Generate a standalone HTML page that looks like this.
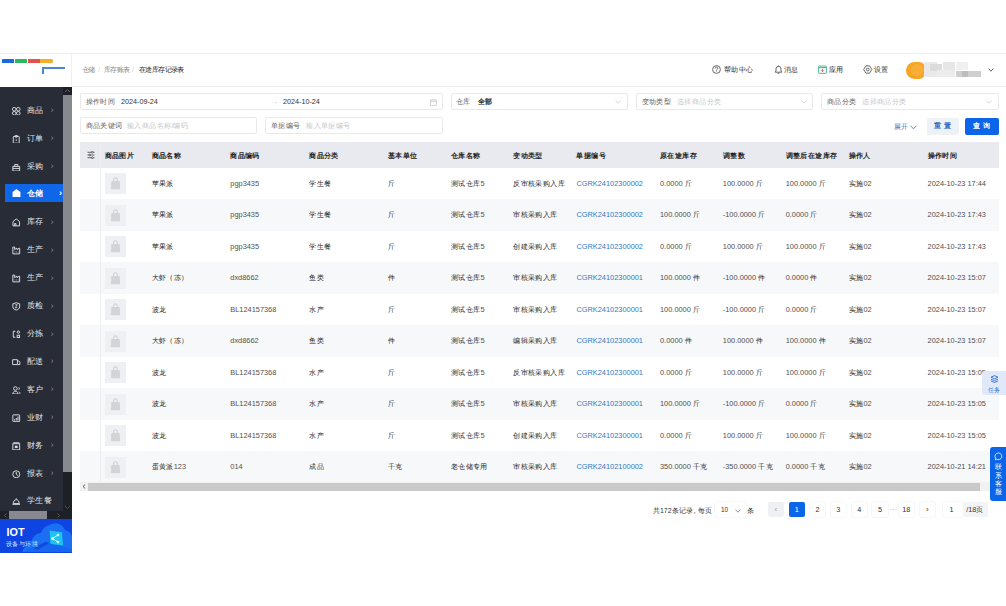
<!DOCTYPE html>
<html><head><meta charset="utf-8">
<style>
*{box-sizing:border-box;margin:0;padding:0}
html,body{width:1006px;height:606px;overflow:hidden;background:#fff;font-family:"Liberation Sans",sans-serif;color:#333}
.a{position:absolute}
#topline{left:0;top:53px;width:1006px;height:1px;background:#e9f0f0}
#logo{left:0;top:54px;width:72px;height:33px;background:#fff;border-right:1px solid #f0f0f0}
#side{left:0;top:87px;width:72px;height:432px;background:#282c37;overflow:hidden}
.mi{position:absolute;left:0;width:63px;height:18px;color:#e4e6ea;font-size:8px;line-height:18px}
.mi .ic{position:absolute;left:12px;top:5px;width:8.5px;height:8.5px}
.mi .tx{position:absolute;left:27px;top:0}
.mi .ar{position:absolute;left:50.5px;top:-0.5px;font-size:9px;color:#80838c}
.mi.on{left:5px;width:58px;background:#0e66e8;color:#fff;font-weight:bold}
.mi.on .ic{left:7px}.mi.on .tx{left:22px;top:0.5px}.mi.on .ar{left:54px;color:#fff}
#vs{left:63px;top:87px;width:9px;height:424px;background:#1e2028}
#vthumb{left:63px;top:95px;width:9px;height:377px;background:#88898e}
#hs{left:0;top:511px;width:72px;height:8px;background:#1e2028}
#hthumb{left:9px;top:511px;width:38px;height:8px;background:#88898e}
#iot{left:0;top:519px;width:72px;height:33.5px;background:#0e44e2;overflow:hidden}
#hdr{left:72px;top:54px;width:934px;height:33px;background:#fff;border-bottom:1px solid #eef0f2}
.bc{font-size:6.6px;color:#8a8a8a;top:66px}
.bc i.z{letter-spacing:-.6px}
.hi{font-size:7.3px;color:#262626;top:65.3px}
.inp{position:absolute;height:17px;border:1px solid #e9e9e9;border-radius:2px;background:#fff;font-size:7.2px;line-height:15px}
.lbl{position:absolute;left:4.5px;top:0;color:#606060}
.ph{position:absolute;top:0;color:#c4c6ca}
.val{position:absolute;top:0;color:#333}
.chev{position:absolute;right:6px;top:5px;width:6px;height:4px}
#th{left:80px;top:142px;width:918.5px;height:25.5px;background:#e9eaf0}
.h{position:absolute;top:150.5px;font-size:7.3px;font-weight:bold;color:#1f1f1f;white-space:nowrap}
.row{position:absolute;left:80px;width:918.5px;height:31.5px;background:#fff}
.row.s{background:#f7f8fa}
.c{position:absolute;font-size:7.4px;color:#505050;white-space:nowrap}
.c i{color:#262626}
.dt{letter-spacing:0.3px}
.lk{color:#2f7ac5}
.img{position:absolute;left:105px;width:21px;height:21px;background:#eef0f3}
#fixline{left:100px;top:142px;width:1px;height:340px;background:#eceef2}
#tscroll{left:80px;top:482px;width:918.5px;height:9px;background:#f1f1f1}
#tthumb{left:88px;top:482.5px;width:892px;height:8px;background:#c9c9c9}
.pg{position:absolute;top:502.4px;height:15px;font-size:7.3px;line-height:15px;text-align:center;color:#333;background:#fff;border-radius:2px;box-shadow:0 0 0 .6px #f0f0f0}
i.z{font-style:normal;letter-spacing:.4px}
</style></head><body>
<div class="a" id="topline"></div>
<div class="a" id="logo">
  <div class="a" style="left:2px;top:5.2px;width:12px;height:3.6px;background:#1c6ae0;border-radius:.5px"></div>
  <div class="a" style="left:15px;top:5.2px;width:12px;height:3.6px;background:#2bb85e;border-radius:.5px"></div>
  <div class="a" style="left:28px;top:5.2px;width:12px;height:3.6px;background:#e4514f"></div>
  <div class="a" style="left:40px;top:5.2px;width:13px;height:3.6px;background:#f4ae2a;border-radius:0 1.5px 1.5px 0"></div>
  <div class="a" style="left:42px;top:13px;width:23px;height:1.5px;background:#4a88c8"></div>
  <div class="a" style="left:42px;top:13px;width:1.5px;height:7px;background:#4a88c8"></div>
</div>
<div class="a" id="side">
  <div class="mi" style="top:14.80px"><svg class="ic" viewBox="0 0 8 8"><g fill="none" stroke="#dcdee3" stroke-width="0.9"><circle cx="2.1" cy="2.1" r="1.7"/><circle cx="5.9" cy="2.1" r="1.7"/><circle cx="2.1" cy="5.9" r="1.7"/><circle cx="5.9" cy="5.9" r="1.7"/></g></svg><span class="tx"><i class="z">商品</i></span><span class="ar">›</span></div>
  <div class="mi" style="top:42.71px"><svg class="ic" viewBox="0 0 8 8"><g fill="none" stroke="#dcdee3" stroke-width="0.9"><rect x="1.2" y="1.3" width="5.6" height="6.4" rx="0.6"/><rect x="2.9" y="0.5" width="2.2" height="1.5" rx="0.3"/></g><circle cx="4" cy="4.8" r="0.7" fill="#dcdee3"/></svg><span class="tx"><i class="z">订单</i></span><span class="ar">›</span></div>
  <div class="mi" style="top:70.62px"><svg class="ic" viewBox="0 0 8 8"><g fill="none" stroke="#dcdee3" stroke-width="0.9"><path d="M0.8 3.2h6.4v4.3H0.8zM2.6 3.2V1.4h2.8v1.8M0.8 5.1h6.4"/></g></svg><span class="tx"><i class="z">采购</i></span><span class="ar">›</span></div>
  <div class="mi on" style="top:97.2px"><svg class="ic" viewBox="0 0 8 8" style="top:4px;width:9px;height:9px"><path d="M0.5 3.5L4 0.8 7.5 3.5V8H0.5z" fill="#fff"/></svg><span class="tx"><i class="z">仓储</i></span><span class="ar">›</span></div>
  <div class="mi" style="top:126.44px"><svg class="ic" viewBox="0 0 8 8"><path d="M0.9 3.4L4 0.9 7.1 3.4V7.4H0.9z" fill="none" stroke="#dcdee3" stroke-width="0.9"/><path d="M2.5 7.4V5.2h1.2v2.2" fill="none" stroke="#dcdee3" stroke-width="0.9"/></svg><span class="tx"><i class="z">库存</i></span><span class="ar">›</span></div>
  <div class="mi" style="top:154.35px"><svg class="ic" viewBox="0 0 8 8"><path d="M0.8 7.4V1h1.7v2.3L4.6 2v1.3L7.2 2v5.4z" fill="none" stroke="#dcdee3" stroke-width="0.9"/><path d="M2.5 5.6h.6M4 5.6h.6M5.5 5.6h.6" stroke="#dcdee3" stroke-width="0.9"/></svg><span class="tx"><i class="z">生产</i></span><span class="ar">›</span></div>
  <div class="mi" style="top:182.26px"><svg class="ic" viewBox="0 0 8 8"><path d="M0.8 7.4V1h1.7v2.3L4.6 2v1.3L7.2 2v5.4z" fill="none" stroke="#dcdee3" stroke-width="0.9"/><path d="M2.5 5.6h.6M4 5.6h.6M5.5 5.6h.6" stroke="#dcdee3" stroke-width="0.9"/></svg><span class="tx"><i class="z">生产</i></span><span class="ar">›</span></div>
  <div class="mi" style="top:210.17px"><svg class="ic" viewBox="0 0 8 8"><path d="M4 0.7L7.2 1.7V4.6C7.2 6.2 5.8 7.1 4 7.6 2.2 7.1 0.8 6.2 0.8 4.6V1.7z" fill="none" stroke="#dcdee3" stroke-width="0.9"/><path d="M3 2.6h2L3 5.4h2" fill="none" stroke="#dcdee3" stroke-width="0.8"/></svg><span class="tx"><i class="z">质检</i></span><span class="ar">›</span></div>
  <div class="mi" style="top:238.08px"><svg class="ic" viewBox="0 0 8 8"><g fill="none" stroke="#dcdee3" stroke-width="0.9"><path d="M2.6 1.2H1.2v5.6h1.4"/><circle cx="6" cy="2" r="1.1"/><rect x="4.9" y="4.9" width="2.2" height="2.2"/></g><path d="M2.4 0.4l1 .8-1 .8zM2.4 6l1 .8-1 .8z" fill="#dcdee3"/></svg><span class="tx"><i class="z">分拣</i></span><span class="ar">›</span></div>
  <div class="mi" style="top:265.99px"><svg class="ic" viewBox="0 0 8 8"><g fill="none" stroke="#dcdee3" stroke-width="0.9"><path d="M0.6 1.6h4.5v4.6H0.6zM5.1 2.8h1.3c.6 0 1 .8 1 1.6v1.8H5.1"/></g></svg><span class="tx"><i class="z">配送</i></span><span class="ar">›</span></div>
  <div class="mi" style="top:293.90px"><svg class="ic" viewBox="0 0 8 8"><g fill="none" stroke="#dcdee3" stroke-width="0.9"><circle cx="3.2" cy="2.4" r="1.7"/><path d="M0.7 7.5C.9 5.6 1.9 5 3.2 5s2.3.6 2.5 2.5z"/><path d="M6.3 1.2c.8.4 .8 2 0 2.4M6.6 5.4c.5.3.8.9.8 2"/></g></svg><span class="tx"><i class="z">客户</i></span><span class="ar">›</span></div>
  <div class="mi" style="top:321.81px"><svg class="ic" viewBox="0 0 8 8"><g fill="none" stroke="#dcdee3" stroke-width="0.9"><rect x="0.8" y="0.8" width="6.4" height="6.4" rx="0.5"/></g><path d="M2.4 6.2V5M4 6.2V3.8M5.6 6.2V2.4" stroke="#dcdee3" stroke-width="1"/></svg><span class="tx"><i class="z">业财</i></span><span class="ar">›</span></div>
  <div class="mi" style="top:349.72px"><svg class="ic" viewBox="0 0 8 8"><g fill="none" stroke="#dcdee3" stroke-width="0.9"><rect x="0.8" y="1.6" width="6.4" height="5.8"/><path d="M1.2 0.7h5.6"/></g><rect x="2.7" y="3.5" width="2.6" height="2.2" fill="#dcdee3"/></svg><span class="tx"><i class="z">财务</i></span><span class="ar">›</span></div>
  <div class="mi" style="top:377.63px"><svg class="ic" viewBox="0 0 8 8"><g fill="none" stroke="#dcdee3" stroke-width="0.9"><circle cx="4" cy="4" r="3.3"/><path d="M4 1.8V4l1.6 1.2"/></g></svg><span class="tx"><i class="z">报表</i></span><span class="ar">›</span></div>
  <div class="mi" style="top:404.7px"><svg class="ic" viewBox="0 0 8 8"><g fill="none" stroke="#dcdee3" stroke-width="0.9"><path d="M1.2 6.2C1.2 4 2.4 2.6 4 2.6S6.8 4 6.8 6.2z"/><path d="M0.4 6.9h7.2M4 1.2v1.2"/></g></svg><span class="tx"><i class="z">学生餐</i></span></div>
</div>
<div class="a" id="vs"></div><div class="a" id="vthumb"></div>
<div class="a" id="hs"></div><div class="a" id="hthumb"></div>
<svg class="a" style="left:64px;top:88px" width="7" height="5" viewBox="0 0 7 5"><path d="M1 4L3.5 1.5 6 4" fill="none" stroke="#777" stroke-width="0.8"/></svg>
<svg class="a" style="left:64px;top:505px" width="7" height="5" viewBox="0 0 7 5"><path d="M1 1L3.5 3.5 6 1" fill="none" stroke="#555" stroke-width="0.8"/></svg>
<svg class="a" style="left:3px;top:512.5px" width="5" height="5" viewBox="0 0 5 5"><path d="M3.5 0.5L1.5 2.5 3.5 4.5" fill="none" stroke="#666" stroke-width="0.8"/></svg>
<svg class="a" style="left:56px;top:512.5px" width="5" height="5" viewBox="0 0 5 5"><path d="M1.5 0.5L3.5 2.5 1.5 4.5" fill="none" stroke="#666" stroke-width="0.8"/></svg>

<div class="a" id="iot">
  <svg class="a" style="left:0;top:0" width="72" height="33" viewBox="0 0 72 33">
    <path d="M22 33 C24 28 28 25 31 23 C33 17 37 14 41 14 C43 9 47 6 52 5 C57 3 63 6 65 11 C69 12 72 15 72 18 V33z" fill="#1b6ff3"/>
    <path d="M24 33 L38 25 L50 24 L72 30 V33z" fill="#1766f0"/>
    <path d="M34 29 L46 22.5 L49 24.5 L37 31z" fill="#0d48dc" opacity="0.85"/>
    <path d="M49.5 11.5 L62 13.2 L63 26.5 L50.5 25z" fill="#1ec4ef"/>
    <g stroke="#e8fbff" stroke-width="1" fill="#e8fbff"><path d="M52.5 19.5 L58 16 M52.5 19.5 L58 23" fill="none"/><circle cx="52.5" cy="19.5" r="1"/><circle cx="58" cy="16" r="0.9"/><circle cx="58" cy="23" r="0.9"/></g>
  </svg>
  <div class="a" style="left:6.5px;top:8.3px;font-size:10.8px;font-weight:bold;color:#fff;line-height:10px">IOT</div>
  <div class="a" style="left:6px;top:22px;font-size:6px;color:#dfe8ff;line-height:6px;letter-spacing:-.1px"><i class="z">设备与环境</i></div>
</div>
<div class="a" id="hdr"></div>
<div class="a bc" style="left:82px"><i class="z">仓储</i></div>
<div class="a bc" style="left:98px;color:#ccc">/</div>
<div class="a bc" style="left:104px"><i class="z">库存账表</i></div>
<div class="a bc" style="left:132px;color:#ccc">/</div>
<div class="a bc" style="left:139px;color:#222"><i class="z">在途库存记录表</i></div>
<div class="a hi" style="left:724px"><i class="z">帮助中心</i></div>
<div class="a hi" style="left:784px"><i class="z">消息</i></div>
<div class="a hi" style="left:829px"><i class="z">应用</i></div>
<div class="a hi" style="left:874px"><i class="z">设置</i></div>

<svg class="a" style="left:712px;top:65px" width="9" height="9" viewBox="0 0 9 9"><circle cx="4.5" cy="4.5" r="3.9" fill="none" stroke="#444" stroke-width="0.8"/><path d="M3.2 3.5a1.3 1.3 0 1 1 1.9 1.1c-.5.3-.6.5-.6 1" fill="none" stroke="#444" stroke-width="0.8"/><circle cx="4.5" cy="6.6" r="0.45" fill="#444"/></svg>
<svg class="a" style="left:773.5px;top:64.5px" width="9" height="9.5" viewBox="0 0 9 9.5"><path d="M1.2 7.2h6.6L7 6V3.8a2.5 2.5 0 0 0-5 0V6z" fill="none" stroke="#444" stroke-width="0.8"/><path d="M3.6 8.3h1.8M4.5 .6v.8" stroke="#444" stroke-width="0.8"/></svg>
<svg class="a" style="left:818px;top:65px" width="9" height="9" viewBox="0 0 9 9"><rect x="0.6" y="1" width="7.8" height="7.4" rx="0.8" fill="#f4fbf8" stroke="#45b08c" stroke-width="0.9"/><path d="M0.6 2.6h7.8" stroke="#45b08c" stroke-width="1"/><path d="M4.5 3.8v2.8M3.3 5.4l1.2 1.2 1.2-1.2" fill="none" stroke="#e2546a" stroke-width="0.9"/></svg>
<svg class="a" style="left:863px;top:65px" width="9.5" height="9" viewBox="0 0 9.5 9"><path d="M3 0.8h3.5L8.8 4.5 6.5 8.2H3L0.7 4.5z" fill="none" stroke="#444" stroke-width="0.8" stroke-linejoin="round"/><circle cx="4.75" cy="4.5" r="1.4" fill="none" stroke="#444" stroke-width="0.8"/></svg>
<svg class="a" style="left:987.5px;top:67.5px" width="6" height="4" viewBox="0 0 6 4"><path d="M0.5 0.6L3 3.2 5.5 0.6" fill="none" stroke="#333" stroke-width="0.8"/></svg>
<div class="a" style="left:906px;top:62px;width:19px;height:16.5px;border-radius:9px 6px 6px 9px;background:#f6a524"></div>
<div class="a" style="left:911px;top:64px;width:12px;height:12px;border-radius:6px;background:#f9b443;opacity:.6"></div>
<div class="a" style="left:924px;top:62px;width:13px;height:15px;background:#e9e9e9"></div>
<div class="a" style="left:930px;top:64px;width:12px;height:7px;background:#dcdcdc"></div>
<div class="a" style="left:943px;top:62px;width:12px;height:8px;background:#e6e6e6"></div>
<div class="a" style="left:956px;top:62px;width:12px;height:8px;background:#f0f0f0"></div>
<div class="a" style="left:937px;top:70px;width:18px;height:7px;background:#ececec"></div>
<div class="a" style="left:956px;top:71px;width:25px;height:6px;background:#cfcfcf"></div>
<div class="a" style="left:962px;top:71px;width:6px;height:6px;background:#bdbdbd"></div>


<div class="inp" style="left:80px;top:93px;width:362.6px"><span class="lbl"><i class="z">操作时间</i></span><span class="val" style="left:40px">2024-09-24</span><span class="ph" style="left:190px">→</span><span class="val" style="left:202px">2024-10-24</span><svg style="position:absolute;left:348.5px;top:4.5px" width="7" height="7" viewBox="0 0 7 7"><rect x="0.5" y="1" width="6" height="5.5" fill="none" stroke="#c4c4c4" stroke-width="0.7"/><path d="M0.5 2.6h6M2 0.3v1.2M5 0.3v1.2" stroke="#c4c4c4" stroke-width="0.7"/></svg></div>
<div class="inp" style="left:450.6px;top:93px;width:177.3px"><span class="lbl"><i class="z">仓库</i></span><span class="val" style="left:26px;font-weight:bold;color:#222"><i class="z">全部</i></span><svg class="chev" style="position:absolute;right:5.5px;top:6px" width="6.5" height="4" viewBox="0 0 6.5 4"><path d="M0.5 0.5L3.25 3.3 6 0.5" fill="none" stroke="#bdbdbd" stroke-width="0.7"/></svg></div>
<div class="inp" style="left:636px;top:93px;width:177.3px"><span class="lbl"><i class="z">变动类型</i></span><span class="ph" style="left:40px"><i class="z">选择商品分类</i></span><svg class="chev" style="position:absolute;right:5.5px;top:6px" width="6.5" height="4" viewBox="0 0 6.5 4"><path d="M0.5 0.5L3.25 3.3 6 0.5" fill="none" stroke="#bdbdbd" stroke-width="0.7"/></svg></div>
<div class="inp" style="left:821.3px;top:93px;width:177.3px"><span class="lbl"><i class="z">商品分类</i></span><span class="ph" style="left:40px"><i class="z">选择商品分类</i></span><svg class="chev" style="position:absolute;right:5.5px;top:6px" width="6.5" height="4" viewBox="0 0 6.5 4"><path d="M0.5 0.5L3.25 3.3 6 0.5" fill="none" stroke="#bdbdbd" stroke-width="0.7"/></svg></div>
<div class="inp" style="left:80px;top:117px;width:177.3px"><span class="lbl"><i class="z">商品关键词</i></span><span class="ph" style="left:46px"><i class="z">输入商品名称</i>/<i class="z">编码</i></span></div>
<div class="inp" style="left:265.3px;top:117px;width:177.3px"><span class="lbl"><i class="z">单据编号</i></span><span class="ph" style="left:40px"><i class="z">输入单据编号</i></span></div>
<div class="a" style="left:894px;top:122px;font-size:7px;color:#2f6fc0"><i class="z">展开</i></div><svg class="a" style="left:909.5px;top:124.5px" width="7" height="5" viewBox="0 0 7 5"><path d="M0.6 0.8L3.5 3.8 6.4 0.8" fill="none" stroke="#2f6fc0" stroke-width="0.8"/></svg>
<div class="a" style="left:926.7px;top:118px;width:32px;height:16.5px;background:#eef1f5;border-radius:2px;font-size:7px;line-height:16.5px;text-align:center;color:#2a6cc4;font-weight:bold"><i class="z">重</i> <i class="z">置</i></div>
<div class="a" style="left:965px;top:118px;width:33.5px;height:16.5px;background:#0c64e8;border-radius:2px;font-size:7px;line-height:16.5px;text-align:center;color:#fff;font-weight:bold"><i class="z">查</i> <i class="z">询</i></div>

<div class="a" id="th"></div>
<div id="rows"><svg class="a" style="left:87px;top:150.5px" width="8" height="8" viewBox="0 0 8 8"><g stroke="#444" stroke-width="0.8" fill="none"><path d="M0.5 1.3h7M0.5 4h7M0.5 6.7h7"/></g><g fill="#e9eaf0" stroke="#444" stroke-width="0.7"><circle cx="5.3" cy="1.3" r="0.9"/><circle cx="2.7" cy="4" r="0.9"/><circle cx="5.3" cy="6.7" r="0.9"/></g></svg>
<div class="h" style="left:104.5px"><i class="z">商品图片</i></div>
<div class="h" style="left:151.5px"><i class="z">商品名称</i></div>
<div class="h" style="left:230.3px"><i class="z">商品编码</i></div>
<div class="h" style="left:309.2px"><i class="z">商品分类</i></div>
<div class="h" style="left:387.8px"><i class="z">基本单位</i></div>
<div class="h" style="left:450.8px"><i class="z">仓库名称</i></div>
<div class="h" style="left:513.3px"><i class="z">变动类型</i></div>
<div class="h" style="left:576.4px"><i class="z">单据编号</i></div>
<div class="h" style="left:660px"><i class="z">原在途库存</i></div>
<div class="h" style="left:722.8px"><i class="z">调整数</i></div>
<div class="h" style="left:785.7px"><i class="z">调整后在途库存</i></div>
<div class="h" style="left:848.6px"><i class="z">操作人</i></div>
<div class="h" style="left:927.6px"><i class="z">操作时间</i></div>
<div class="row" style="top:167.5px"></div>
<div class="img" style="top:173.0px"><svg viewBox="0 0 21 21" width="21" height="21"><path d="M8.6 8.2V6.8a1.9 1.9 0 0 1 3.8 0v1.4" fill="none" stroke="#d2d4d8" stroke-width="1.1"/><path d="M6.3 8h8.4l0.4 8.2H5.9z" fill="#d2d4d8"/></svg></div>
<div class="c" style="left:151.5px;top:178.5px"><i class="z">苹果派</i></div>
<div class="c" style="left:230.3px;top:178.5px">pgp3435</div>
<div class="c" style="left:309.2px;top:178.5px"><i class="z">学生餐</i></div>
<div class="c" style="left:387.8px;top:178.5px"><i class="z">斤</i></div>
<div class="c" style="left:450.8px;top:178.5px"><i class="z">测试仓库</i>5</div>
<div class="c" style="left:513.3px;top:178.5px"><i class="z">反审核采购入库</i></div>
<div class="c lk" style="left:576.4px;top:178.5px">CGRK24102300002</div>
<div class="c" style="left:660px;top:178.5px">0.0000 <i class="z">斤</i></div>
<div class="c" style="left:722.8px;top:178.5px">100.0000 <i class="z">斤</i></div>
<div class="c" style="left:785.7px;top:178.5px">100.0000 <i class="z">斤</i></div>
<div class="c" style="left:848.6px;top:178.5px"><i class="z">实施</i>02</div>
<div class="c" style="left:927.6px;top:178.5px">2024-10-23 17:44</div>
<div class="row s" style="top:199.0px"></div>
<div class="img" style="top:204.5px"><svg viewBox="0 0 21 21" width="21" height="21"><path d="M8.6 8.2V6.8a1.9 1.9 0 0 1 3.8 0v1.4" fill="none" stroke="#d2d4d8" stroke-width="1.1"/><path d="M6.3 8h8.4l0.4 8.2H5.9z" fill="#d2d4d8"/></svg></div>
<div class="c" style="left:151.5px;top:210.0px"><i class="z">苹果派</i></div>
<div class="c" style="left:230.3px;top:210.0px">pgp3435</div>
<div class="c" style="left:309.2px;top:210.0px"><i class="z">学生餐</i></div>
<div class="c" style="left:387.8px;top:210.0px"><i class="z">斤</i></div>
<div class="c" style="left:450.8px;top:210.0px"><i class="z">测试仓库</i>5</div>
<div class="c" style="left:513.3px;top:210.0px"><i class="z">审核采购入库</i></div>
<div class="c lk" style="left:576.4px;top:210.0px">CGRK24102300002</div>
<div class="c" style="left:660px;top:210.0px">100.0000 <i class="z">斤</i></div>
<div class="c" style="left:722.8px;top:210.0px">-100.0000 <i class="z">斤</i></div>
<div class="c" style="left:785.7px;top:210.0px">0.0000 <i class="z">斤</i></div>
<div class="c" style="left:848.6px;top:210.0px"><i class="z">实施</i>02</div>
<div class="c" style="left:927.6px;top:210.0px">2024-10-23 17:43</div>
<div class="row" style="top:230.5px"></div>
<div class="img" style="top:236.0px"><svg viewBox="0 0 21 21" width="21" height="21"><path d="M8.6 8.2V6.8a1.9 1.9 0 0 1 3.8 0v1.4" fill="none" stroke="#d2d4d8" stroke-width="1.1"/><path d="M6.3 8h8.4l0.4 8.2H5.9z" fill="#d2d4d8"/></svg></div>
<div class="c" style="left:151.5px;top:241.5px"><i class="z">苹果派</i></div>
<div class="c" style="left:230.3px;top:241.5px">pgp3435</div>
<div class="c" style="left:309.2px;top:241.5px"><i class="z">学生餐</i></div>
<div class="c" style="left:387.8px;top:241.5px"><i class="z">斤</i></div>
<div class="c" style="left:450.8px;top:241.5px"><i class="z">测试仓库</i>5</div>
<div class="c" style="left:513.3px;top:241.5px"><i class="z">创建采购入库</i></div>
<div class="c lk" style="left:576.4px;top:241.5px">CGRK24102300002</div>
<div class="c" style="left:660px;top:241.5px">0.0000 <i class="z">斤</i></div>
<div class="c" style="left:722.8px;top:241.5px">100.0000 <i class="z">斤</i></div>
<div class="c" style="left:785.7px;top:241.5px">100.0000 <i class="z">斤</i></div>
<div class="c" style="left:848.6px;top:241.5px"><i class="z">实施</i>02</div>
<div class="c" style="left:927.6px;top:241.5px">2024-10-23 17:43</div>
<div class="row s" style="top:262.0px"></div>
<div class="img" style="top:267.5px"><svg viewBox="0 0 21 21" width="21" height="21"><path d="M8.6 8.2V6.8a1.9 1.9 0 0 1 3.8 0v1.4" fill="none" stroke="#d2d4d8" stroke-width="1.1"/><path d="M6.3 8h8.4l0.4 8.2H5.9z" fill="#d2d4d8"/></svg></div>
<div class="c" style="left:151.5px;top:273.0px"><i class="z">大虾（冻）</i></div>
<div class="c" style="left:230.3px;top:273.0px">dxd8662</div>
<div class="c" style="left:309.2px;top:273.0px"><i class="z">鱼类</i></div>
<div class="c" style="left:387.8px;top:273.0px"><i class="z">件</i></div>
<div class="c" style="left:450.8px;top:273.0px"><i class="z">测试仓库</i>5</div>
<div class="c" style="left:513.3px;top:273.0px"><i class="z">审核采购入库</i></div>
<div class="c lk" style="left:576.4px;top:273.0px">CGRK24102300001</div>
<div class="c" style="left:660px;top:273.0px">100.0000 <i class="z">件</i></div>
<div class="c" style="left:722.8px;top:273.0px">-100.0000 <i class="z">件</i></div>
<div class="c" style="left:785.7px;top:273.0px">0.0000 <i class="z">件</i></div>
<div class="c" style="left:848.6px;top:273.0px"><i class="z">实施</i>02</div>
<div class="c" style="left:927.6px;top:273.0px">2024-10-23 15:07</div>
<div class="row" style="top:293.5px"></div>
<div class="img" style="top:299.0px"><svg viewBox="0 0 21 21" width="21" height="21"><path d="M8.6 8.2V6.8a1.9 1.9 0 0 1 3.8 0v1.4" fill="none" stroke="#d2d4d8" stroke-width="1.1"/><path d="M6.3 8h8.4l0.4 8.2H5.9z" fill="#d2d4d8"/></svg></div>
<div class="c" style="left:151.5px;top:304.5px"><i class="z">波龙</i></div>
<div class="c" style="left:230.3px;top:304.5px">BL124157368</div>
<div class="c" style="left:309.2px;top:304.5px"><i class="z">水产</i></div>
<div class="c" style="left:387.8px;top:304.5px"><i class="z">斤</i></div>
<div class="c" style="left:450.8px;top:304.5px"><i class="z">测试仓库</i>5</div>
<div class="c" style="left:513.3px;top:304.5px"><i class="z">审核采购入库</i></div>
<div class="c lk" style="left:576.4px;top:304.5px">CGRK24102300001</div>
<div class="c" style="left:660px;top:304.5px">100.0000 <i class="z">斤</i></div>
<div class="c" style="left:722.8px;top:304.5px">-100.0000 <i class="z">斤</i></div>
<div class="c" style="left:785.7px;top:304.5px">0.0000 <i class="z">斤</i></div>
<div class="c" style="left:848.6px;top:304.5px"><i class="z">实施</i>02</div>
<div class="c" style="left:927.6px;top:304.5px">2024-10-23 15:07</div>
<div class="row s" style="top:325.0px"></div>
<div class="img" style="top:330.5px"><svg viewBox="0 0 21 21" width="21" height="21"><path d="M8.6 8.2V6.8a1.9 1.9 0 0 1 3.8 0v1.4" fill="none" stroke="#d2d4d8" stroke-width="1.1"/><path d="M6.3 8h8.4l0.4 8.2H5.9z" fill="#d2d4d8"/></svg></div>
<div class="c" style="left:151.5px;top:336.0px"><i class="z">大虾（冻）</i></div>
<div class="c" style="left:230.3px;top:336.0px">dxd8662</div>
<div class="c" style="left:309.2px;top:336.0px"><i class="z">鱼类</i></div>
<div class="c" style="left:387.8px;top:336.0px"><i class="z">件</i></div>
<div class="c" style="left:450.8px;top:336.0px"><i class="z">测试仓库</i>5</div>
<div class="c" style="left:513.3px;top:336.0px"><i class="z">编辑采购入库</i></div>
<div class="c lk" style="left:576.4px;top:336.0px">CGRK24102300001</div>
<div class="c" style="left:660px;top:336.0px">0.0000 <i class="z">件</i></div>
<div class="c" style="left:722.8px;top:336.0px">100.0000 <i class="z">件</i></div>
<div class="c" style="left:785.7px;top:336.0px">100.0000 <i class="z">件</i></div>
<div class="c" style="left:848.6px;top:336.0px"><i class="z">实施</i>02</div>
<div class="c" style="left:927.6px;top:336.0px">2024-10-23 15:07</div>
<div class="row" style="top:356.5px"></div>
<div class="img" style="top:362.0px"><svg viewBox="0 0 21 21" width="21" height="21"><path d="M8.6 8.2V6.8a1.9 1.9 0 0 1 3.8 0v1.4" fill="none" stroke="#d2d4d8" stroke-width="1.1"/><path d="M6.3 8h8.4l0.4 8.2H5.9z" fill="#d2d4d8"/></svg></div>
<div class="c" style="left:151.5px;top:367.5px"><i class="z">波龙</i></div>
<div class="c" style="left:230.3px;top:367.5px">BL124157368</div>
<div class="c" style="left:309.2px;top:367.5px"><i class="z">水产</i></div>
<div class="c" style="left:387.8px;top:367.5px"><i class="z">斤</i></div>
<div class="c" style="left:450.8px;top:367.5px"><i class="z">测试仓库</i>5</div>
<div class="c" style="left:513.3px;top:367.5px"><i class="z">反审核采购入库</i></div>
<div class="c lk" style="left:576.4px;top:367.5px">CGRK24102300001</div>
<div class="c" style="left:660px;top:367.5px">0.0000 <i class="z">斤</i></div>
<div class="c" style="left:722.8px;top:367.5px">100.0000 <i class="z">斤</i></div>
<div class="c" style="left:785.7px;top:367.5px">100.0000 <i class="z">斤</i></div>
<div class="c" style="left:848.6px;top:367.5px"><i class="z">实施</i>02</div>
<div class="c" style="left:927.6px;top:367.5px">2024-10-23 15:05</div>
<div class="row s" style="top:388.0px"></div>
<div class="img" style="top:393.5px"><svg viewBox="0 0 21 21" width="21" height="21"><path d="M8.6 8.2V6.8a1.9 1.9 0 0 1 3.8 0v1.4" fill="none" stroke="#d2d4d8" stroke-width="1.1"/><path d="M6.3 8h8.4l0.4 8.2H5.9z" fill="#d2d4d8"/></svg></div>
<div class="c" style="left:151.5px;top:399.0px"><i class="z">波龙</i></div>
<div class="c" style="left:230.3px;top:399.0px">BL124157368</div>
<div class="c" style="left:309.2px;top:399.0px"><i class="z">水产</i></div>
<div class="c" style="left:387.8px;top:399.0px"><i class="z">斤</i></div>
<div class="c" style="left:450.8px;top:399.0px"><i class="z">测试仓库</i>5</div>
<div class="c" style="left:513.3px;top:399.0px"><i class="z">审核采购入库</i></div>
<div class="c lk" style="left:576.4px;top:399.0px">CGRK24102300001</div>
<div class="c" style="left:660px;top:399.0px">100.0000 <i class="z">斤</i></div>
<div class="c" style="left:722.8px;top:399.0px">-100.0000 <i class="z">斤</i></div>
<div class="c" style="left:785.7px;top:399.0px">0.0000 <i class="z">斤</i></div>
<div class="c" style="left:848.6px;top:399.0px"><i class="z">实施</i>02</div>
<div class="c" style="left:927.6px;top:399.0px">2024-10-23 15:05</div>
<div class="row" style="top:419.5px"></div>
<div class="img" style="top:425.0px"><svg viewBox="0 0 21 21" width="21" height="21"><path d="M8.6 8.2V6.8a1.9 1.9 0 0 1 3.8 0v1.4" fill="none" stroke="#d2d4d8" stroke-width="1.1"/><path d="M6.3 8h8.4l0.4 8.2H5.9z" fill="#d2d4d8"/></svg></div>
<div class="c" style="left:151.5px;top:430.5px"><i class="z">波龙</i></div>
<div class="c" style="left:230.3px;top:430.5px">BL124157368</div>
<div class="c" style="left:309.2px;top:430.5px"><i class="z">水产</i></div>
<div class="c" style="left:387.8px;top:430.5px"><i class="z">斤</i></div>
<div class="c" style="left:450.8px;top:430.5px"><i class="z">测试仓库</i>5</div>
<div class="c" style="left:513.3px;top:430.5px"><i class="z">创建采购入库</i></div>
<div class="c lk" style="left:576.4px;top:430.5px">CGRK24102300001</div>
<div class="c" style="left:660px;top:430.5px">0.0000 <i class="z">斤</i></div>
<div class="c" style="left:722.8px;top:430.5px">100.0000 <i class="z">斤</i></div>
<div class="c" style="left:785.7px;top:430.5px">100.0000 <i class="z">斤</i></div>
<div class="c" style="left:848.6px;top:430.5px"><i class="z">实施</i>02</div>
<div class="c" style="left:927.6px;top:430.5px">2024-10-23 15:05</div>
<div class="row s" style="top:451.0px"></div>
<div class="img" style="top:456.5px"><svg viewBox="0 0 21 21" width="21" height="21"><path d="M8.6 8.2V6.8a1.9 1.9 0 0 1 3.8 0v1.4" fill="none" stroke="#d2d4d8" stroke-width="1.1"/><path d="M6.3 8h8.4l0.4 8.2H5.9z" fill="#d2d4d8"/></svg></div>
<div class="c" style="left:151.5px;top:462.0px"><i class="z">蛋黄派</i>123</div>
<div class="c" style="left:230.3px;top:462.0px">014</div>
<div class="c" style="left:309.2px;top:462.0px"><i class="z">成品</i></div>
<div class="c" style="left:387.8px;top:462.0px"><i class="z">千克</i></div>
<div class="c" style="left:450.8px;top:462.0px"><i class="z">老仓储专用</i></div>
<div class="c" style="left:513.3px;top:462.0px"><i class="z">审核采购入库</i></div>
<div class="c lk" style="left:576.4px;top:462.0px">CGRK24102100002</div>
<div class="c" style="left:660px;top:462.0px">350.0000 <i class="z">千克</i></div>
<div class="c" style="left:722.8px;top:462.0px">-350.0000 <i class="z">千克</i></div>
<div class="c" style="left:785.7px;top:462.0px">0.0000 <i class="z">千克</i></div>
<div class="c" style="left:848.6px;top:462.0px"><i class="z">实施</i>02</div>
<div class="c" style="left:927.6px;top:462.0px">2024-10-21 14:21</div></div><!--/rows-->
<div class="a" id="fixline"></div>
<div class="a" id="tscroll"></div><div class="a" id="tthumb"></div><svg class="a" style="left:82px;top:484px" width="4" height="5" viewBox="0 0 4 5"><path d="M3.2 0.5L1 2.5 3.2 4.5" fill="none" stroke="#555" stroke-width="0.9"/></svg>

<div class="a" style="left:652.5px;top:506px;font-size:7px;color:#333;white-space:nowrap"><i class="z">共</i>172<i class="z">条记录</i>, <i class="z">每页</i></div>
<div class="pg" style="left:714.5px;width:31px;text-align:left;padding-left:6.5px;font-size:6.3px">10</div>
<svg class="a" style="left:735px;top:508.5px" width="6" height="4" viewBox="0 0 6 4"><path d="M0.5 0.6L3 3.2 5.5 0.6" fill="none" stroke="#666" stroke-width="0.7"/></svg>
<div class="a" style="left:747px;top:506px;font-size:7px;color:#333"><i class="z">条</i></div>
<div class="pg" style="left:768px;width:15.7px;background:#eff0f2;color:#999;box-shadow:none;font-size:8px">‹</div>
<div class="pg" style="left:789px;width:15.7px;background:#0c64e8;color:#fff;box-shadow:none">1</div>
<div class="pg" style="left:809.7px;width:15.7px">2</div>
<div class="pg" style="left:830.5px;width:15.7px">3</div>
<div class="pg" style="left:851.5px;width:15.7px">4</div>
<div class="pg" style="left:872.2px;width:15.7px">5</div>
<div class="pg" style="left:889px;width:9px;color:#999;box-shadow:none;background:none">···</div>
<div class="pg" style="left:898.5px;width:15.7px">18</div>
<div class="pg" style="left:919.5px;width:15.7px;font-size:8px">›</div>
<div class="pg" style="left:943px;width:19.5px;text-align:left;padding-left:6.5px">1</div>
<div class="pg" style="left:962.5px;width:25px;background:#f3f4f6;color:#333;box-shadow:none">/18<i class="z">页</i></div>
<div class="a" style="left:982px;top:371px;width:24px;height:24px;background:#e0e9f9;border-radius:3px 0 0 3px"></div>
<svg class="a" style="left:989.5px;top:374.5px" width="9" height="8" viewBox="0 0 9 8"><g fill="none" stroke="#2f6cd0" stroke-width="0.9"><path d="M4.5 0.6L8 2.2 4.5 3.8 1 2.2z"/><path d="M1 4.2l3.5 1.5L8 4.2M1 6l3.5 1.5L8 6"/></g></svg>
<div class="a" style="left:988px;top:385.5px;font-size:6px;color:#2f6cd0;letter-spacing:-.2px"><i class="z">任务</i></div>
<div class="a" style="left:990px;top:446.5px;width:16px;height:54px;background:#0c64e8;border-radius:3px 0 0 3px"></div>
<svg class="a" style="left:993.8px;top:452px" width="9" height="9" viewBox="0 0 9 9"><path d="M4.5 1a3.5 3.3 0 1 1-1.8 6.2L1.2 7.8l.5-1.5A3.5 3.3 0 0 1 4.5 1z" fill="none" stroke="#fff" stroke-width="0.8"/></svg>
<div class="a" style="left:994.6px;top:463.3px;width:8px;font-size:7px;line-height:8.2px;color:#fff"><i class="z">联系客服</i></div>
</body></html>
